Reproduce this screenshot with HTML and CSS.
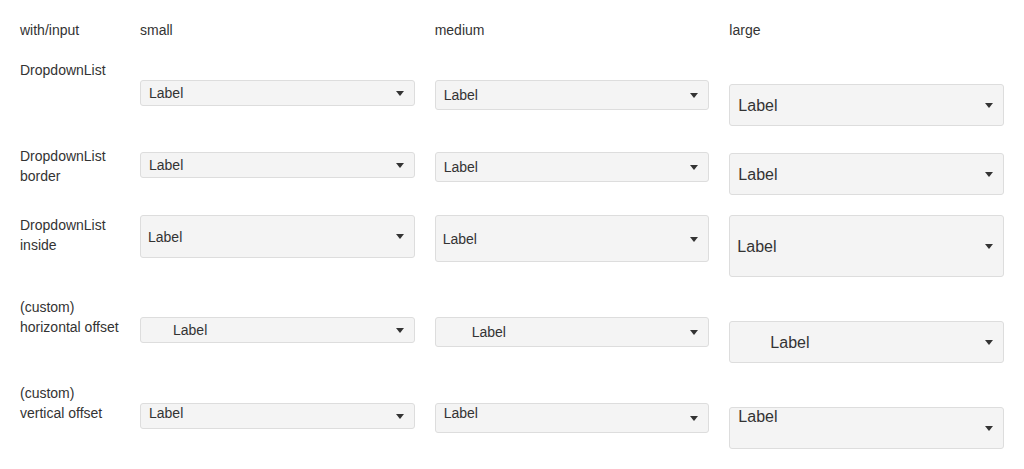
FILE: index.html
```html
<!DOCTYPE html>
<html>
<head>
<meta charset="utf-8">
<link rel="stylesheet" href="styles.css">
</head>
<body>
<div class="table">
  <div class="row head">
    <div class="name">with/input</div>
    <div class="cell">small</div>
    <div class="cell">medium</div>
    <div class="cell">large</div>
  </div>

  <div class="row">
    <div class="name">DropdownList</div>
    <div class="cell"><div class="dd sm push"><span class="lbl">Label</span><span class="arrow"></span></div></div>
    <div class="cell"><div class="dd md push"><span class="lbl">Label</span><span class="arrow"></span></div></div>
    <div class="cell"><div class="dd lg push-lg"><span class="lbl">Label</span><span class="arrow"></span></div></div>
  </div>

  <div class="row">
    <div class="name">DropdownList<br>border</div>
    <div class="cell"><div class="dd sm push-b"><span class="lbl">Label</span><span class="arrow"></span></div></div>
    <div class="cell"><div class="dd md push-b"><span class="lbl">Label</span><span class="arrow"></span></div></div>
    <div class="cell"><div class="dd lg push-b-lg"><span class="lbl">Label</span><span class="arrow"></span></div></div>
  </div>

  <div class="row">
    <div class="name">DropdownList<br>inside</div>
    <div class="cell"><div class="dd sm inside"><span class="lbl">Label</span><span class="arrow"></span></div></div>
    <div class="cell"><div class="dd md inside"><span class="lbl">Label</span><span class="arrow"></span></div></div>
    <div class="cell"><div class="dd lg inside"><span class="lbl">Label</span><span class="arrow"></span></div></div>
  </div>

  <div class="row">
    <div class="name">(custom)<br>horizontal offset</div>
    <div class="cell"><div class="dd sm push hoff"><span class="lbl">Label</span><span class="arrow"></span></div></div>
    <div class="cell"><div class="dd md push hoff"><span class="lbl">Label</span><span class="arrow"></span></div></div>
    <div class="cell"><div class="dd lg push-lg hoff"><span class="lbl">Label</span><span class="arrow"></span></div></div>
  </div>

  <div class="row">
    <div class="name">(custom)<br>vertical offset</div>
    <div class="cell"><div class="dd sm push voff"><span class="lbl">Label</span><span class="arrow"></span></div></div>
    <div class="cell"><div class="dd md push voff"><span class="lbl">Label</span><span class="arrow"></span></div></div>
    <div class="cell"><div class="dd lg push-lg voff"><span class="lbl">Label</span><span class="arrow"></span></div></div>
  </div>
</div>
</body>
</html>
```
FILE: styles.css
```css
html, body {
  margin: 0;
  padding: 0;
  background: #fff;
}
body {
  font-family: "Liberation Sans", Arial, sans-serif;
  font-size: 14px;
  line-height: 20px;
  color: #333;
  padding: 20px 20px 0 20px;
}
.table {
  display: flex;
  flex-direction: column;
  gap: 20px;
}
.row {
  display: grid;
  grid-template-columns: 100px 1fr 1fr 1fr;
  column-gap: 20px;
  align-items: start;
}
.name, .cell {
  min-width: 0;
}
.name {
  white-space: nowrap;
}
.dd {
  display: flex;
  align-items: center;
  box-sizing: border-box;
  background: #f4f4f4;
  border: 1px solid #ddd;
  border-radius: 3px;
  padding: 0 10px 0 8px;
  color: #333;
}
.dd .lbl {
  flex: 1;
  white-space: nowrap;
}
.arrow {
  width: 0;
  height: 0;
  border-left: 4px solid transparent;
  border-right: 4px solid transparent;
  border-top: 5px solid #333;
  flex: none;
}
.sm { height: 26px; font-size: 14px; }
.md { height: 30px; font-size: 14px; }
.lg { height: 42px; font-size: 16px; }
.lg .lbl { margin-top: 2px; }

.push { margin-top: 20px; }
.push-lg { margin-top: 24px; }
.push-b { margin-top: 6px; }
.push-b-lg { margin-top: 7px; }

.inside { padding-left: 7px; }
.sm.inside { height: 43px; }
.md.inside { height: 47px; }
.lg.inside { height: 62px; }

.sm.hoff { padding-left: 32px; }
.md.hoff { padding-left: 36px; }
.lg.hoff { padding-left: 40px; }

.sm.voff .lbl { margin-bottom: 6px; }
.md.voff .lbl { margin-bottom: 10px; }
.lg.voff .lbl { margin-bottom: 24px; }
.md .arrow { margin-top: 1px; }
```
